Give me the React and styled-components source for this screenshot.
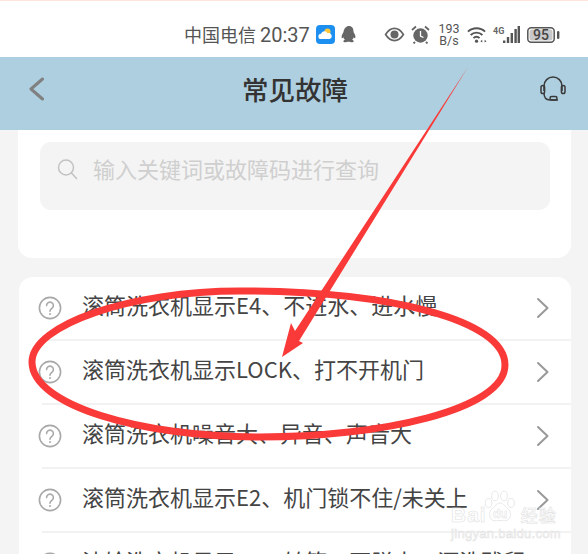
import React from 'react';
import styled, { createGlobalStyle } from 'styled-components';

const GlobalStyle = createGlobalStyle`
  html, body {
    margin: 0;
    padding: 0;
    background: #f4f4f4;
    overflow: hidden;
  }
  * { box-sizing: border-box; }
`;

const FONT = '"Noto Sans CJK SC", "Noto Sans", sans-serif';

const Page = styled.div`
  position: relative;
  width: 588px;
  height: 554px;
  overflow: hidden;
  background: #f4f4f4;
  font-family: ${FONT};
`;

const StatusBar = styled.div`
  height: 57px;
  background: #fff;
  border-top: 1px solid #fde4dc;
  display: flex;
  align-items: center;
  padding: 11px 0 0 184px;
  color: #555;
`;

const Carrier = styled.span`
  font-size: 18px;
  line-height: 24px;
  white-space: nowrap;
  width: 132px;
`;

const Clock = styled.span`
  font-family: Roboto, sans-serif;
  font-size: 20px;
  margin-left: 4px;
`;

const StatusIcons = styled.div`
  display: flex;
  align-items: center;
`;

const Speed = styled.div`
  width: 22px;
  margin: 0 7px 0 8px;
  font-family: Roboto, sans-serif;
  font-size: 12.5px;
  line-height: 12px;
  text-align: center;
`;

const Header = styled.div`
  height: 73px;
  background: #aecfe0;
  display: flex;
  align-items: center;
  justify-content: space-between;
  padding: 0 22px 9px 28px;
`;

const Title = styled.h1`
  margin: 0 0 0 4px;
  font-size: 26.5px;
  font-weight: 500;
  line-height: 34px;
  color: #333;
`;

const TopCard = styled.div`
  margin: 0 17px 0 18px;
  height: 128px;
  background: #fff;
  border-radius: 0 0 14px 14px;
  padding: 12px 21px 0 22px;
`;

const SearchBox = styled.div`
  height: 68px;
  background: #f4f4f4;
  border-radius: 11px;
  display: flex;
  align-items: flex-start;
  gap: 15px;
  padding: 11px 0 0 17px;
`;

const Placeholder = styled.span`
  font-size: 22px;
  line-height: 30px;
  color: #cfcfcf;
`;

const ListCard = styled.div`
  margin: 19px 17px 0 19px;
  background: #fff;
  border-radius: 14px;
`;

const Row = styled.div`
  height: 64px;
  margin-left: 23px;
  display: flex;
  align-items: center;
  padding: 0 21px 0 0;
  border-bottom: 2px solid #f2f2f2;
`;

const RowIcon = styled.svg`
  margin-left: -4px;
  flex: none;
`;

const RowText = styled.span`
  flex: 1;
  margin-left: 20px;
  padding-bottom: 8px;
  font-size: 22px;
  line-height: 30px;
  color: #444;
  white-space: nowrap;
`;

const Overlay = styled.svg`
  position: absolute;
  left: 0;
  top: 0;
  pointer-events: none;
`;

const Watermark = styled.div`
  position: absolute;
  left: 451px;
  top: 490px;
  width: 108px;
  height: 50px;
  color: #fff;
  -webkit-text-stroke: 0.6px #e2e2e2;
  font-family: "Liberation Sans", sans-serif;
`;

const WatermarkBrand = styled.div`
  display: flex;
  align-items: center;
  height: 20px;
  margin-top: 15px;
  font-size: 21px;
  font-weight: 700;
  line-height: 20px;
  letter-spacing: 1px;
`;

const WatermarkCn = styled.span`
  margin-left: 34px;
  font-family: ${FONT};
  font-size: 17px;
  font-weight: 500;
`;

const WatermarkUrl = styled.div`
  margin-top: 1px;
  font-size: 13px;
  line-height: 15px;
  letter-spacing: 0.3px;
  white-space: nowrap;
`;

const WatermarkPaw = styled.svg`
  position: absolute;
  left: 33px;
  top: 0;
`;

const QuestionIcon = () => (
  <RowIcon width="24" height="24" viewBox="0 0 24 24" fill="none">
    <circle cx="12" cy="12" r="10.6" stroke="#a8a8a8" strokeWidth="1.6" />
    <path d="M8.6 9.6a3.4 3.4 0 1 1 5.4 2.7c-1.2.9-2 1.4-2 2.9" stroke="#a8a8a8" strokeWidth="1.6" strokeLinecap="round" />
    <circle cx="12" cy="18" r="1" fill="#a8a8a8" />
  </RowIcon>
);

const Chevron = () => (
  <svg width="14" height="22" viewBox="0 0 14 22" fill="none">
    <path d="M2 2l9.5 9L2 20" stroke="#999" strokeWidth="2" strokeLinecap="round" strokeLinejoin="round" />
  </svg>
);

const rows = [
  '滚筒洗衣机显示E4、不进水、进水慢',
  '滚筒洗衣机显示LOCK、打不开机门',
  '滚筒洗衣机噪音大、异音、声音大',
  '滚筒洗衣机显示E2、机门锁不住/未关上',
  '波轮洗衣机显示E3、转筒、不脱水、漂洗残留',
];

export default function App() {
  return (
    <Page>
      <GlobalStyle />
      <StatusBar>
        <Carrier>中国电信<Clock>20:37</Clock></Carrier>
        <StatusIcons>
          <svg width="19" height="19" viewBox="0 0 19 19">
            <rect width="19" height="19" rx="4" fill="#1c8ff0" />
            <circle cx="11.5" cy="6.5" r="3" fill="#ffc83a" />
            <path d="M5 14a2.6 2.6 0 0 1 0-5.2 3.6 3.6 0 0 1 6.6-.6 3 3 0 0 1 2 5.8z" fill="#fff" />
          </svg>
          <svg width="16" height="19" viewBox="0 0 17 19" style={{ marginLeft: 6 }}>
            <path d="M8.5 0.5c3.2 0 4.7 2.5 4.7 5.2 0 1 .6 1.9 1.3 3.2.9 1.8 1.2 3.9.4 4.5-.5.3-1-.4-1.4-1.100-.3 1.200-.9 2.200-1.700 2.900 1 .4 1.900 1 1.700 1.800-.2.800-2 1-3.500.6-.8-.2-1.200-.4-2-.4s-1.200.2-2 .4c-1.500.4-3.300.2-3.500-.6-.2-.8.7-1.400 1.700-1.800-.8-.7-1.400-1.700-1.700-2.900-.4.7-.9 1.400-1.400 1.100-.8-.6-.5-2.700.4-4.500.7-1.300 1.300-2.200 1.300-3.200C3.800 3 5.300.5 8.500.5z" fill="#666" />
          </svg>
          <svg width="21" height="15" viewBox="0 0 21 16" fill="none" style={{ marginLeft: 27 }}>
            <path d="M1 8c2.500-4 5.700-6.500 9.500-6.500S17.500 4 20 8c-2.500 4-5.700 6.500-9.500 6.500S3.500 12 1 8z" stroke="#666" strokeWidth="1.800" />
            <circle cx="10.500" cy="8" r="4.300" fill="#666" />
          </svg>
          <svg width="19" height="19" viewBox="0 0 19 19" fill="none" style={{ marginLeft: 6 }}>
            <circle cx="9.500" cy="10.500" r="7.200" fill="#666" />
            <path d="M9.500 6v5l3 1.500" stroke="#fff" strokeWidth="1.300" />
            <path d="M1 5l4-3.500M18 5l-4-3.500M4 17l-1.500 1.500M15 17l1.500 1.500" stroke="#666" strokeWidth="1.800" />
          </svg>
          <Speed>193<br />B/s</Speed>
          <svg width="20" height="18" viewBox="0 0 21 18" fill="none">
            <path d="M1 5.500a13 13 0 0 1 18 0M3.800 9a9 9 0 0 1 12.400 0M6.800 12.200a4.500 4.500 0 0 1 6.400 0" stroke="#555" strokeWidth="2" />
            <circle cx="10" cy="15.500" r="1.700" fill="#555" />
            <path d="M14 15.500l2-1.500v3zM20.500 15.500l-2-1.500v3z" fill="#555" />
          </svg>
          <svg width="27" height="18" viewBox="0 0 27 18" style={{ marginLeft: 6 }}>
            <text x="0" y="8" fontSize="9" fontWeight="700" fontFamily="Roboto, sans-serif" fill="#666">4G</text>
            <rect x="10" y="14.500" width="2.400" height="2.500" fill="#555" />
            <rect x="13.800" y="11" width="2.400" height="6" fill="#555" />
            <rect x="17.600" y="7" width="2.400" height="10" fill="#555" />
            <rect x="21.400" y="3" width="2.400" height="14" fill="#555" />
            <rect x="24.600" y="0" width="2.400" height="17" fill="#555" />
          </svg>
          <svg width="33" height="16" viewBox="0 0 33 16" style={{ marginLeft: 7 }}>
            <rect x="0.800" y="0.800" width="26.400" height="14.400" rx="3.500" fill="none" stroke="#555" strokeWidth="1.500" />
            <rect x="2.500" y="2.500" width="23" height="11" rx="2" fill="#c8c8c8" />
            <text x="14" y="13" fontSize="14" fontWeight="500" fontFamily="Roboto, sans-serif" textAnchor="middle" fill="#444">95</text>
            <rect x="30" y="4" width="2.400" height="8" rx="1.200" fill="#555" />
          </svg>
        </StatusIcons>
      </StatusBar>

      <Header>
        <svg width="18" height="24" viewBox="0 0 18 24" fill="none">
          <path d="M14.500 2L3 12l11.500 10" stroke="#808080" strokeWidth="3" strokeLinecap="round" strokeLinejoin="round" />
        </svg>
        <Title>常见故障</Title>
        <svg width="26" height="26" viewBox="0 0 26 26" fill="none">
          <path d="M4 15V10a9 9 0 0 1 18 0v5" stroke="#3a3a3a" strokeWidth="1.500" />
          <rect x="1" y="9.500" width="3.600" height="8" rx="1.800" stroke="#3a3a3a" strokeWidth="1.500" />
          <rect x="21.400" y="9.500" width="3.600" height="8" rx="1.800" stroke="#3a3a3a" strokeWidth="1.500" />
          <path d="M4 17c0 4 2 7 6 7h8" stroke="#3a3a3a" strokeWidth="1.500" />
          <rect x="10" y="20.500" width="7" height="3.500" rx="1.700" stroke="#3a3a3a" strokeWidth="1.500" />
        </svg>
      </Header>

      <TopCard>
        <SearchBox>
          <svg width="21" height="23" viewBox="0 0 21 23" fill="none" style={{ marginTop: 5 }}>
            <circle cx="9" cy="9.500" r="7.500" stroke="#c2c2c2" strokeWidth="1.500" />
            <path d="M14.500 15l5 5.500" stroke="#c2c2c2" strokeWidth="1.500" strokeLinecap="round" />
          </svg>
          <Placeholder>输入关键词或故障码进行查询</Placeholder>
        </SearchBox>
      </TopCard>

      <ListCard>
        {rows.map((text) => (
          <Row key={text}>
            <QuestionIcon />
            <RowText>{text}</RowText>
            <Chevron />
          </Row>
        ))}
      </ListCard>

      <Watermark>
        <WatermarkPaw width="32" height="33" viewBox="0 0 32 33">
          <g fill="#fff" stroke="#e2e2e2" strokeWidth="0.800">
            <ellipse cx="4.500" cy="13" rx="3.300" ry="4.500" />
            <ellipse cx="11" cy="6" rx="3.300" ry="4.800" />
            <ellipse cx="20" cy="6" rx="3.300" ry="4.800" />
            <ellipse cx="27" cy="13" rx="3.300" ry="4.500" />
            <path d="M16 13c4 0 5 4 8 6 3 2 3 7 1 10-2 2.500-6 1.500-9 1.500s-7 1-9-1.500c-2-3-2-8 1-10 3-2 4-6 8-6z" />
          </g>
          <text x="16" y="28" fontSize="12" fontWeight="700" textAnchor="middle" fill="#fff" stroke="#e2e2e2" strokeWidth="0.500">du</text>
        </WatermarkPaw>
        <WatermarkBrand>
          Bai
          <WatermarkCn>经验</WatermarkCn>
        </WatermarkBrand>
        <WatermarkUrl>jingyan.baidu.com</WatermarkUrl>
      </Watermark>

      <Overlay width="588" height="554" viewBox="0 0 588 554">
        <path d="M468 67L299 341L303 343L282 357L291 323L295 331z" fill="#f93a38" />
        <path
          d="M505 365C505 320 390 291 240 291C130 291 32 325 32 362C32 405 140 437 260 437C380 437 505 410 505 365z"
          fill="none"
          stroke="#f93a38"
          strokeWidth="7"
        />
      </Overlay>
    </Page>
  );
}
